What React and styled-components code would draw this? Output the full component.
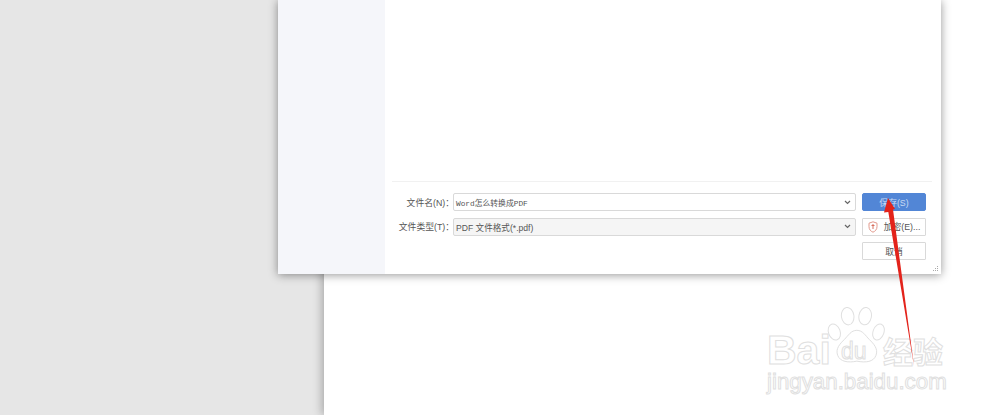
import React from 'react'
import styled, { createGlobalStyle } from 'styled-components'

const GlobalStyle = createGlobalStyle`
  html, body {
    margin: 0;
    padding: 0;
    background: #e6e6e6;
  }
  * {
    box-sizing: border-box;
  }
`

const Page = styled.div`
  position: relative;
  display: flex;
  justify-content: flex-end;
  width: 1000px;
  height: 415px;
  overflow: hidden;
  background: #e6e6e6;
  font-family: "Liberation Sans", "Noto Sans CJK SC", sans-serif;
`

const Sheet = styled.div`
  width: 676px;
  height: 100%;
  background: #fff;
  box-shadow: -2px 0 9px rgba(0, 0, 0, 0.28);
`

const Dialog = styled.div`
  position: absolute;
  left: 278px;
  top: 0;
  display: flex;
  width: 663px;
  height: 274px;
  background: #fff;
  box-shadow: 0 1px 9px rgba(0, 0, 0, 0.42);
`

const Sidebar = styled.aside`
  width: 107px;
  background: #f5f6fa;
`

const Main = styled.div`
  flex: 1;
  display: flex;
  flex-direction: column;
  justify-content: flex-end;
  padding: 0 9px 14px 7px;
`

const Form = styled.div`
  display: grid;
  grid-template-columns: 61px 403px 70px;
  grid-template-rows: 18px 18px 18px;
  row-gap: 6.5px;
  padding-top: 11.5px;
  border-top: 1px solid #f1f1f1;
`

const Label = styled.label`
  display: flex;
  align-items: center;
  justify-content: flex-end;
  margin-right: -1px;
  font-size: 8.8px;
  color: #555;
  white-space: nowrap;
`

const Field = styled.div`
  display: flex;
  align-items: center;
  justify-content: space-between;
  padding: 0 4px 0 2px;
  border: 1px solid #d9d9d9;
  border-radius: 2px;
  background: ${(p) => (p.$readOnly ? '#f5f5f5' : '#fff')};
  font-family: ${(p) => (p.$mono ? '"Liberation Mono", "Noto Sans CJK SC", monospace' : 'inherit')};
  font-size: ${(p) => (p.$mono ? '7.8px' : '8.6px')};
  color: #555;
`

const Chevron = styled.svg`
  width: 7px;
  height: 5px;
  flex: none;
`

const ActionCell = styled.div`
  display: flex;
  justify-content: flex-end;
`

const Action = styled.button`
  display: flex;
  align-items: center;
  justify-content: center;
  gap: 6px;
  width: 64px;
  height: 100%;
  padding: 0;
  border: 1px solid ${(p) => (p.$primary ? '#5286d6' : '#d9d9d9')};
  border-radius: ${(p) => (p.$primary ? '2px' : '1px')};
  background: ${(p) => (p.$primary ? '#5286d6' : '#fff')};
  color: ${(p) => (p.$primary ? '#c9daf3' : '#555')};
  font-family: inherit;
  font-size: 8.8px;
  white-space: nowrap;
`

const Shield = styled.svg`
  width: 10px;
  height: 12px;
  flex: none;
`

const Grip = styled.svg`
  position: absolute;
  right: 2px;
  bottom: 2px;
  width: 7px;
  height: 7px;
`

const Arrow = styled.svg`
  position: absolute;
  left: 878px;
  top: 195px;
  width: 50px;
  height: 180px;
`

const Watermark = styled.div`
  position: absolute;
  left: 765px;
  top: 306px;
  width: 186px;
  pointer-events: none;
`

const Paw = styled.svg`
  position: absolute;
  left: 62px;
  top: 1px;
  width: 58px;
  height: 60px;
`

const LogoRow = styled.div`
  position: relative;
  height: 62px;
`

const outline = `
  position: absolute;
  color: #fff;
  -webkit-text-stroke: 1px #e0e0e0;
  white-space: nowrap;
`

const LogoLatin = styled.span`
  ${outline}
  left: 2px;
  top: 24px;
  font-size: 41px;
  font-weight: 700;
  line-height: 41px;
`

const LogoDu = styled.span`
  ${outline}
  left: 76px;
  top: 34px;
  font-size: 23px;
  line-height: 23px;
`

const LogoCjk = styled.span`
  ${outline}
  left: 118px;
  top: 29px;
  font-family: "Noto Sans CJK SC", sans-serif;
  font-size: 30px;
  font-weight: 700;
  line-height: 30px;
`

const LogoUrl = styled.div`
  color: #fff;
  -webkit-text-stroke: 1px #e0e0e0;
  margin-top: 2px;
  padding-left: 2px;
  font-size: 22.3px;
  line-height: 24px;
  white-space: nowrap;
`

const Caret = () => (
  <Chevron viewBox="0 0 7 5">
    <path d="M1 1l2.5 2.5L6 1" fill="none" stroke="#666" strokeWidth="1.2" />
  </Chevron>
)

export default function App() {
  return (
    <Page>
      <GlobalStyle />
      <Sheet />
      <Dialog>
        <Sidebar />
        <Main>
          <Form>
            <Label>文件名(N)：</Label>
            <Field $mono>
              <span>Word怎么转换成PDF</span>
              <Caret />
            </Field>
            <ActionCell>
              <Action $primary>保存(S)</Action>
            </ActionCell>
            <Label>文件类型(T)：</Label>
            <Field $readOnly>
              <span>PDF 文件格式(*.pdf)</span>
              <Caret />
            </Field>
            <ActionCell>
              <Action>
                <Shield viewBox="0 0 10 12">
                  <path d="M5 .8l4 1.4v3.5c0 2.7-1.7 4.5-4 5.5-2.3-1-4-2.8-4-5.5V2.200z" fill="#fff" stroke="#e2998c" strokeWidth="1" />
                  <path d="M5 3v5M3.500 4.500h3" fill="none" stroke="#d8705f" strokeWidth="1" />
                </Shield>
                加密(E)...
              </Action>
            </ActionCell>
            <span />
            <span />
            <ActionCell>
              <Action>取消</Action>
            </ActionCell>
          </Form>
        </Main>
        <Grip viewBox="0 0 7 7">
          <path d="M5.500 1v1M3.500 3v1M5.500 3v1M1.500 5v1M3.500 5v1M5.500 5v1" stroke="#aaa" strokeWidth="1" />
        </Grip>
      </Dialog>
      <Watermark>
        <LogoRow>
          <Paw viewBox="0 0 68 72">
            <g fill="#fff" stroke="#e0e0e0" strokeWidth="1.200">
              <ellipse cx="8" cy="30" rx="7" ry="10" transform="rotate(-20 8 30)" />
              <ellipse cx="24" cy="11" rx="7.500" ry="10.500" transform="rotate(-8 24 11)" />
              <ellipse cx="45" cy="11" rx="7.500" ry="10.500" transform="rotate(10 45 11)" />
              <ellipse cx="61" cy="30" rx="6.500" ry="10" transform="rotate(20 61 30)" />
              <path d="M35 28c7 0 10 6 15 11s11 11 8 19c-3 8-12 9-23 7-10 2-20 1-23-7-3-8 3-14 8-19s8-11 15-11z" />
            </g>
          </Paw>
          <LogoLatin>Bai</LogoLatin>
          <LogoDu>du</LogoDu>
          <LogoCjk>经验</LogoCjk>
        </LogoRow>
        <LogoUrl>jingyan.baidu.com</LogoUrl>
      </Watermark>
      <Arrow viewBox="0 0 50 180">
        <path d="M10 3L17 14L15 14.500L36 171L10.300 17L6 17.500z" fill="#e3231b" />
      </Arrow>
    </Page>
  )
}
